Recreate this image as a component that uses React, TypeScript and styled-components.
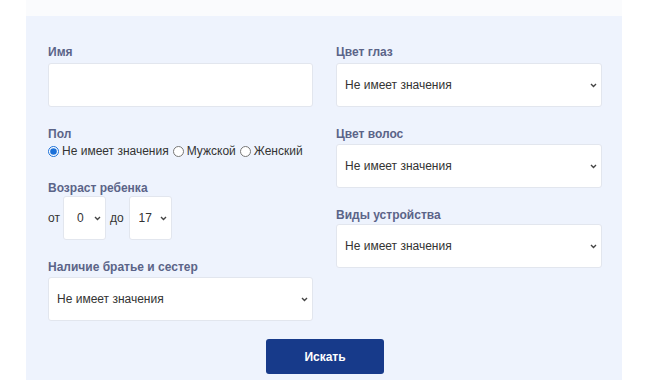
import React from 'react';
import styled, { createGlobalStyle } from 'styled-components';

const chevron =
	"url(\"data:image/svg+xml;utf8,<svg xmlns='http://www.w3.org/2000/svg' width='7' height='5' viewBox='0 0 7 5'><path d='M1 1l2.5 2.5L6 1' fill='none' stroke='%23444' stroke-width='1.4'/></svg>\")";

const GlobalStyle = createGlobalStyle`
  body {
    margin: 0;
    background: #ffffff;
    font-family: "Liberation Sans", Arial, sans-serif;
  }
`;

const Page = styled.div`
  width: 596px;
  margin-left: 26px;
`;

const TopStrip = styled.div`
  height: 16px;
  background: #fafbfd;
`;

const Panel = styled.form`
  background: #eef3fd;
  padding: 27px 20px 20px 22px;
  min-height: 364px;
  box-sizing: border-box;
`;

const Columns = styled.div`
  display: grid;
  grid-template-columns: 265px 266px;
  column-gap: 23px;
`;

const Column = styled.div`
  display: flex;
  flex-direction: column;
`;

const Field = styled.div<{ $top?: number; $labelGap?: number }>`
  display: flex;
  flex-direction: column;
  margin-top: ${(p) => p.$top ?? 0}px;
  gap: ${(p) => p.$labelGap ?? 3}px;
`;

const Label = styled.label`
  padding-top: 2px;
  font-size: 12px;
  line-height: 15px;
  font-weight: 700;
  color: #5b6488;
`;

const TextInput = styled.input`
  height: 44px;
  box-sizing: border-box;
  border: 1px solid #e2e6ee;
  border-radius: 3px;
  background: #ffffff;
  padding: 0 9px;
  font: 12px "Liberation Sans", Arial, sans-serif;
  outline: none;
`;

const Select = styled.select<{ $padLeft?: number }>`
  appearance: none;
  -webkit-appearance: none;
  height: 44px;
  box-sizing: border-box;
  border: 1px solid #e2e6ee;
  border-radius: 3px;
  background: #ffffff ${chevron} no-repeat right 4px center;
  padding: 0 18px 0 ${(p) => p.$padLeft ?? 8}px;
  font: 12px "Liberation Sans", Arial, sans-serif;
  color: #333333;
  outline: none;
`;

const AgeSelect = styled(Select)`
  width: 43px;
  padding-right: 4px;
`;

const RadioRow = styled.div`
  display: flex;
  align-items: center;
  gap: 4px;
  height: 16px;
  font-size: 12px;
  color: #333333;
  white-space: nowrap;
`;

const RadioOption = styled.label`
  display: flex;
  align-items: center;
  cursor: pointer;
`;

const Radio = styled.input`
  width: 11px;
  height: 11px;
  margin: 0 3px 0 0;
  accent-color: #1a6fd8;
`;

const AgeRow = styled.div`
  display: flex;
  align-items: center;
  font-size: 12px;
  color: #333333;
`;

const AgeWord = styled.span<{ $before?: number; $after: number }>`
  margin-left: ${(p) => p.$before ?? 0}px;
  margin-right: ${(p) => p.$after}px;
`;

const ButtonRow = styled.div`
  display: flex;
  justify-content: center;
  margin-top: 18px;
`;

const SearchButton = styled.button`
  width: 118px;
  height: 35px;
  border: none;
  border-radius: 3px;
  background: #173a8a;
  color: #ffffff;
  font: 700 12px "Liberation Sans", Arial, sans-serif;
  cursor: pointer;
`;

const ANY = 'Не имеет значения';

const AnySelect: React.FC = () => (
	<Select defaultValue={ANY}>
		<option>{ANY}</option>
	</Select>
);

const ages = Array.from({ length: 18 }, (_, i) => <option key={i}>{i}</option>);

export default function App(): JSX.Element {
	return (
		<>
			<GlobalStyle />
			<Page>
				<TopStrip />
				<Panel onSubmit={(e) => e.preventDefault()}>
					<Columns>
						<Column>
							<Field>
								<Label>Имя</Label>
								<TextInput type="text" />
							</Field>
							<Field $top={18} $labelGap={1}>
								<Label>Пол</Label>
								<RadioRow>
									<RadioOption><Radio type="radio" name="sex" defaultChecked />Не имеет значения</RadioOption>
									<RadioOption><Radio type="radio" name="sex" />Мужской</RadioOption>
									<RadioOption><Radio type="radio" name="sex" />Женский</RadioOption>
								</RadioRow>
							</Field>
							<Field $top={20} $labelGap={0}>
								<Label>Возраст ребенка</Label>
								<AgeRow>
									<AgeWord $after={3}>от</AgeWord>
									<AgeSelect $padLeft={13} defaultValue="0">{ages}</AgeSelect>
									<AgeWord $before={4} $after={5}>до</AgeWord>
									<AgeSelect $padLeft={9} defaultValue="17">{ages}</AgeSelect>
								</AgeRow>
							</Field>
							<Field $top={18} $labelGap={2}>
								<Label>Наличие братье и сестер</Label>
								<AnySelect />
							</Field>
						</Column>
						<Column>
							<Field>
								<Label>Цвет глаз</Label>
								<AnySelect />
							</Field>
							<Field $top={18} $labelGap={2}>
								<Label>Цвет волос</Label>
								<AnySelect />
							</Field>
							<Field $top={18} $labelGap={1}>
								<Label>Виды устройства</Label>
								<AnySelect />
							</Field>
						</Column>
					</Columns>
					<ButtonRow>
						<SearchButton type="submit">Искать</SearchButton>
					</ButtonRow>
				</Panel>
			</Page>
		</>
	);
}
